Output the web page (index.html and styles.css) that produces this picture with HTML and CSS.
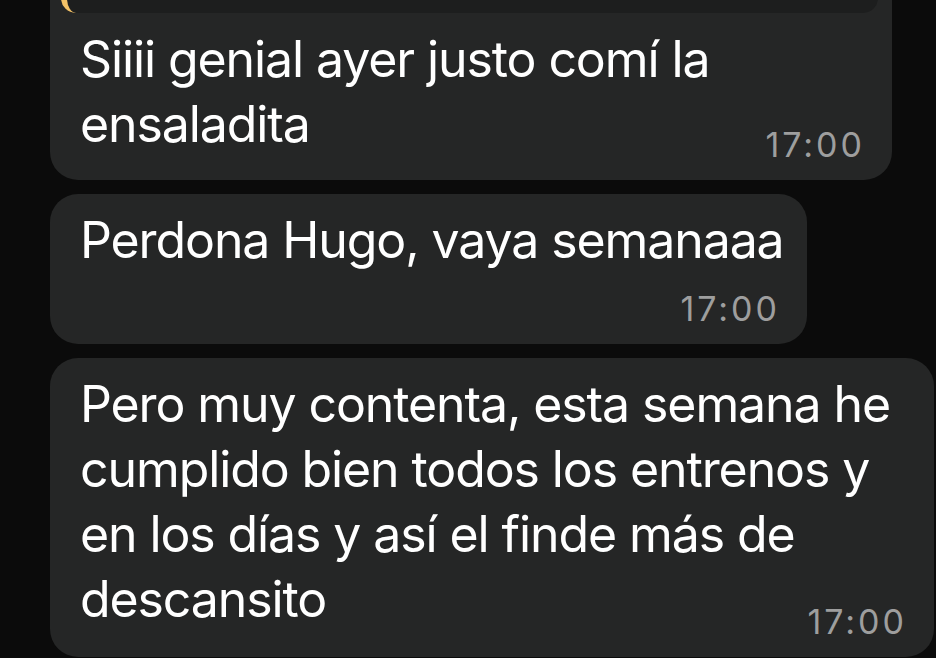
FILE: index.html
```html
<!DOCTYPE html>
<html lang="es">
<head>
<meta charset="utf-8">
<title>Chat</title>
<link rel="stylesheet" href="styles.css">
</head>
<body>
<main class="chat">
  <div class="bubble bubble--first">
    <div class="quote"></div>
    <p class="text">Siiii genial ayer justo comí la<br>ensaladita</p>
    <div class="time time--inline">17:00</div>
  </div>
  <div class="bubble bubble--second">
    <p class="text">Perdona Hugo, vaya semanaaa</p>
    <div class="time">17:00</div>
  </div>
  <div class="bubble bubble--third">
    <p class="text">Pero muy contenta, esta semana he<br>cumplido bien todos los entrenos y<br>en los días y así el finde más de<br>descansito</p>
    <div class="time time--inline time--low">17:00</div>
  </div>
</main>
</body>
</html>
```
FILE: styles.css
```css
html, body {
  margin: 0;
  padding: 0;
  background: #0b0b0b;
  overflow: hidden;
}

.chat {
  display: flex;
  flex-direction: column;
  align-items: flex-start;
  gap: 13.5px;
  padding-left: 50px;
  margin-top: -59px;
  font-family: "Inter", "Noto Sans", sans-serif;
}

.bubble {
  box-sizing: border-box;
  background: #252626;
  border-radius: 28px;
  padding: 14.5px 30px 15.4px 30px;
  color: #ffffff;
}

.bubble--first {
  width: 842px;
  padding-top: 12px;
}

.bubble--second {
  width: 757px;
}

.bubble--third {
  width: 884px;
}

.quote {
  height: 60px;
  margin: 0 -16px 14.3px -19px;
  background: #1d1e1e;
  border-left: 6px solid #f3c267;
  border-radius: 15px;
}

.text {
  margin: 0;
  font-size: 50px;
  line-height: 65px;
  white-space: nowrap;
  letter-spacing: -1.1px;
}

.time {
  margin-top: 16px;
  margin-right: -3px;
  font-size: 34px;
  line-height: 40px;
  letter-spacing: 3px;
  color: #9e9e9e;
  text-align: right;
}

.time--inline {
  margin-top: -32.7px;
}

.time--low {
  margin-top: -30.7px;
}
```
